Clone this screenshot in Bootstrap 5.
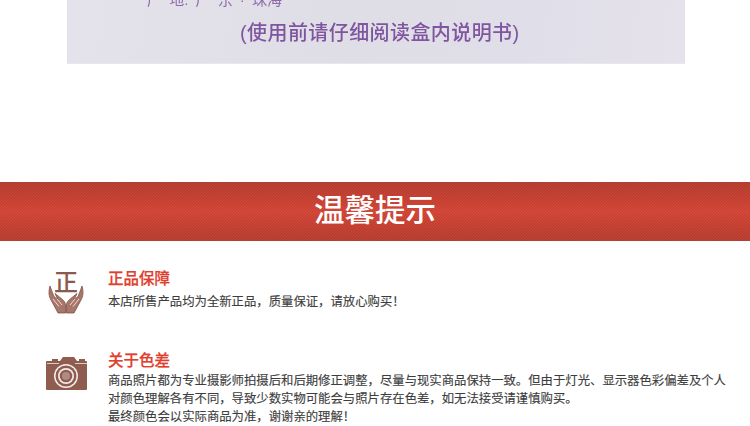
<!DOCTYPE html>
<html lang="zh"><head><meta charset="utf-8"><title>温馨提示</title>
<link href="https://cdn.jsdelivr.net/npm/bootstrap@5.3.0/dist/css/bootstrap.min.css" rel="stylesheet">
<script src="https://cdn.jsdelivr.net/npm/bootstrap@5.3.0/dist/js/bootstrap.bundle.min.js"></script>
<style>
html,body{margin:0;background:#fff;overflow:hidden}
body{width:750px;height:426px;font-family:"Liberation Sans","Noto Sans CJK SC",sans-serif;color:#444}
svg{display:block}
.photo-panel{width:618px;height:64px;margin-left:67px;background:linear-gradient(100deg,#e4e2ea 0%,#dfdde6 45%,#e0dee8 75%,#e5e2ec 100%);color:#7f559f;overflow:hidden;border-bottom:1px solid #e9e7ee}
.origin-line{font-size:15px;line-height:16px;height:10px;margin-top:-8px;padding-left:80px;word-spacing:3px;white-space:nowrap;opacity:.85;filter:blur(.3px)}
.usage-line{font-size:20px;line-height:24px;margin-top:19px;padding-left:173px;letter-spacing:.42px;white-space:nowrap;font-weight:500;filter:blur(.35px)}
.tip-banner{height:59px;margin-top:118px;background:repeating-linear-gradient(135deg,rgba(0,0,0,.05) 0 1.06px,rgba(255,255,255,.03) 1.06px 2.1213px),linear-gradient(180deg,#b93f32 0%,#cb4132 28%,#d84738 50%,#cb4132 74%,#ba3f32 100%);color:#fff;font-size:30.5px;line-height:56px;text-align:center;font-weight:500}
.tip-row{padding-left:45px}
.tip-row-first{margin-top:28px}
.tip-row-second{margin-top:36px}
.tip-icon{width:63px;flex:none}
.tip-icon-camera{padding-top:5px}
.tip-title{font-size:15.5px;line-height:20px;color:#df3f2d;font-weight:500;margin:0;-webkit-text-stroke:.25px #df3f2d}
.tip-text{font-size:12.36px;line-height:18px;color:#3d3d3d;margin:0;width:620px;white-space:nowrap;-webkit-text-stroke:.12px #3d3d3d}
.tip-text-gap{margin-top:1px}
.seal-glyph{font-size:24px;font-weight:500;font-family:"Noto Sans CJK SC",sans-serif;fill:#8a5a4d}
</style></head><body>
<div class="photo-panel">
  <div class="origin-line">产 地: 广 东 · 珠海</div>
  <div class="usage-line">(使用前请仔细阅读盒内说明书)</div>
</div>
<div class="tip-banner">温馨提示</div>
<div class="d-flex tip-row tip-row-first">
  <div class="tip-icon">
    <svg width="46" height="46" viewBox="0 0 46 46">
      <text class="seal-glyph" x="9" y="22">正</text>
      <g>
        <path fill="#a8766a" stroke="#7f5044" stroke-width=".8" d="M5 17C3.5 22 3.6 27 6 31L13 44H20.5V36C20.5 33.5 19 32 17.5 30.5L10 24.5 13 31 9 27.5 7 22.5Z"/>
        <path fill="none" stroke="#f3e8e4" stroke-width=".9" d="M8 30l6 7.5M12 30l5 6"/>
      </g>
      <g transform="matrix(-1 0 0 1 42 0)">
        <path fill="#a8766a" stroke="#7f5044" stroke-width=".8" d="M5 17C3.5 22 3.6 27 6 31L13 44H20.5V36C20.5 33.5 19 32 17.5 30.5L10 24.5 13 31 9 27.5 7 22.5Z"/>
        <path fill="none" stroke="#f3e8e4" stroke-width=".9" d="M8 30l6 7.5M12 30l5 6"/>
      </g>
    </svg>
  </div>
  <div>
    <h6 class="tip-title">正品保障</h6>
    <p class="tip-text mt-1">本店所售产品均为全新正品，质量保证，请放心购买！</p>
  </div>
</div>
<div class="d-flex tip-row tip-row-second">
  <div class="tip-icon tip-icon-camera">
    <svg width="43" height="36" viewBox="0 0 43 36">
      <path fill="#8f5c50" d="M2 5h5V3h6v2h2l3-4h11l3 4h2V3h6v2h1a1 1 0 0 1 1 1v27a1 1 0 0 1-1 1H2a1 1 0 0 1-1-1V6a1 1 0 0 1 1-1z"/>
      <path stroke="#f2e6e2" stroke-width=".8" d="M2 7.5h12M30 7.5h12"/>
      <circle cx="21" cy="20" r="12" fill="#f4ece9"/>
      <circle cx="21" cy="20" r="10.5" fill="#8f5c50"/>
      <circle cx="21" cy="20" r="8" fill="#f4ece9"/>
      <circle cx="21" cy="20" r="6.3" fill="#8f5c50"/>
      <circle cx="21" cy="20" r="4" fill="#b08b81"/>
    </svg>
  </div>
  <div>
    <h6 class="tip-title">关于色差</h6>
    <p class="tip-text tip-text-gap">商品照片都为专业摄影师拍摄后和后期修正调整，尽量与现实商品保持一致。但由于灯光、显示器色彩偏差及个人<br>对颜色理解各有不同，导致少数实物可能会与照片存在色差，如无法接受请谨慎购买。<br>最终颜色会以实际商品为准，谢谢亲的理解！</p>
  </div>
</div>
</body></html>
